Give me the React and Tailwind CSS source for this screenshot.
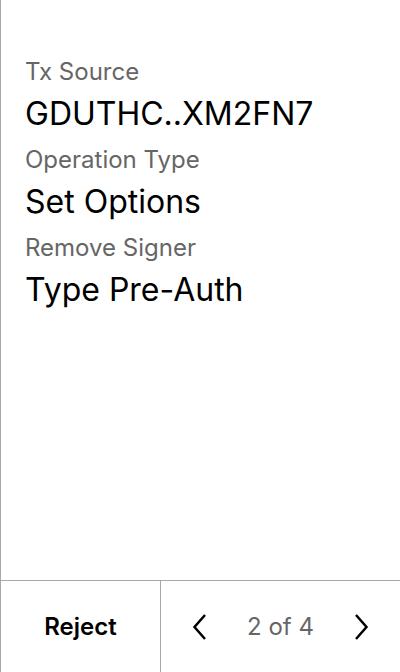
import { useState } from 'react';

const FIELDS = [
  { label: 'Tx Source', value: 'GDUTHC..XM2FN7' },
  { label: 'Operation Type', value: 'Set Options' },
  { label: 'Remove Signer', value: 'Type Pre-Auth' },
];

function Chevron({ dir }) {
  const d = dir === 'left' ? 'M13 2 L2.5 14 L13 26' : 'M3 2 L13.5 14 L3 26';
  return (
    <svg width="16" height="28" viewBox="0 0 16 28" fill="none">
      <path d={d} stroke="#000" strokeWidth="2.5" strokeLinecap="butt" strokeLinejoin="miter" />
    </svg>
  );
}

export default function App() {
  const [page, setPage] = useState(2);
  const total = 4;

  return (
    <div
      className="flex h-[672px] w-[400px] flex-col border-l border-[#a8a8a8] bg-white text-black"
      style={{ fontFamily: 'Inter, "Noto Sans", sans-serif' }}
    >
      <main className="flex flex-1 flex-col pl-6 pt-[58px]">
        {FIELDS.map((f) => (
          <div key={f.label} className="mb-[12px] flex flex-col">
            <span className="text-[24px] leading-[28px] text-[#666]">{f.label}</span>
            <span className="mt-[8px] text-[32px] leading-[40px] text-black">{f.value}</span>
          </div>
        ))}
      </main>

      <footer className="flex h-[92px] border-t border-[#a8a8a8]">
        <button className="flex w-[160px] items-center justify-center border-r border-[#a8a8a8] text-[24px] font-semibold">
          Reject
        </button>
        <div className="flex flex-1 items-center justify-between pl-[31px] pr-[31px]">
          <button onClick={() => setPage((p) => Math.max(1, p - 1))}>
            <Chevron dir="left" />
          </button>
          <span className="text-[24px] text-[#666]">
            {page} of {total}
          </span>
          <button onClick={() => setPage((p) => Math.min(total, p + 1))}>
            <Chevron dir="right" />
          </button>
        </div>
      </footer>
    </div>
  );
}
